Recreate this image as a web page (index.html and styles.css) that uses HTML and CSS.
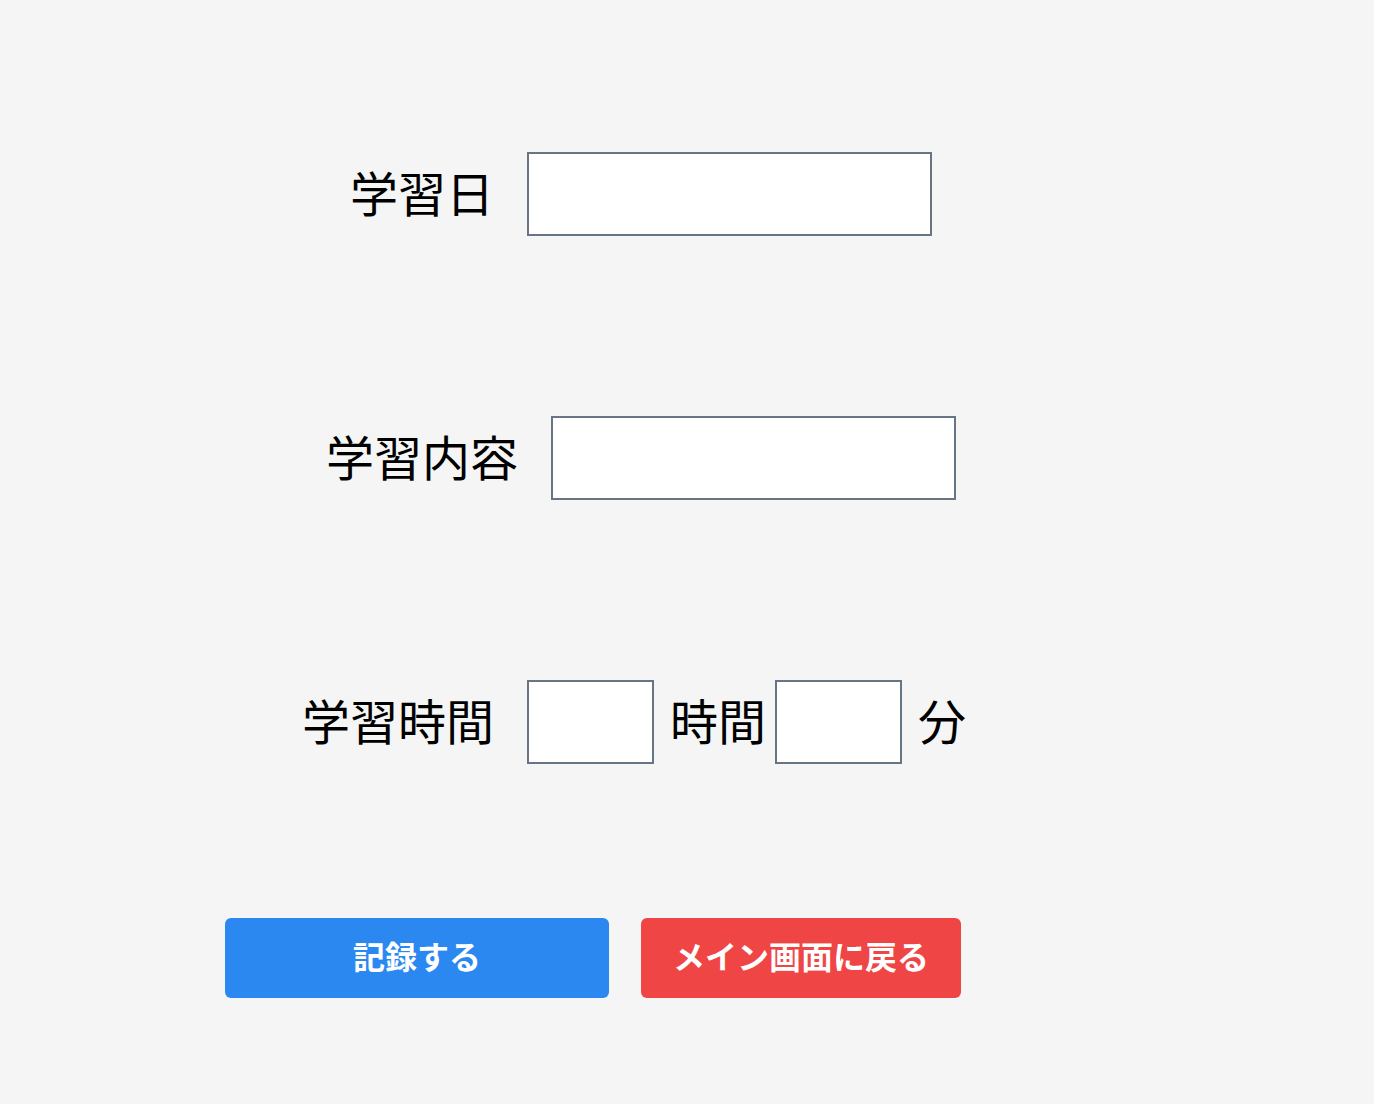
FILE: index.html
```html
<!DOCTYPE html>
<html lang="ja">
<head>
<meta charset="utf-8">
<title>学習記録</title>
<link rel="stylesheet" href="styles.css">
</head>
<body>
<main class="page">
  <form class="form">
    <div class="row">
      <label class="label" for="date">学習日</label>
      <input class="field field-wide" id="date" type="text">
    </div>
    <div class="row">
      <label class="label" for="content">学習内容</label>
      <input class="field field-wide" id="content" type="text">
    </div>
    <div class="row">
      <label class="label" for="hours">学習時間</label>
      <input class="field field-small" id="hours" type="text">
      <span class="unit">時間</span>
      <input class="field field-small" id="minutes" type="text">
      <span class="unit">分</span>
    </div>
    <div class="actions">
      <button class="btn btn-primary" type="button">記録する</button>
      <button class="btn btn-danger" type="button">メイン画面に戻る</button>
    </div>
  </form>
</main>
</body>
</html>
```

FILE: styles.css
```css
html, body {
  margin: 0;
  padding: 0;
  background: #f5f5f5;
}
body {
  font-family: "Noto Sans CJK JP", "Noto Sans", sans-serif;
  color: #000;
}
.page {
  width: 832px;
  margin-left: 225px;
  padding-top: 152px;
}
.form {
  display: flex;
  flex-direction: column;
}
.row {
  display: flex;
  align-items: center;
  justify-content: center;
  height: 84px;
  margin-bottom: 180px;
}
.row:nth-child(3) {
  margin-bottom: 154px;
}
.label {
  font-size: 48px;
  line-height: 1;
  padding-bottom: 6px;
  margin-right: 33px;
}
.field {
  box-sizing: border-box;
  height: 84px;
  border: 2px solid #687585;
  background: #fff;
  margin: 0;
  padding: 0 10px;
  font-size: 24px;
  font-family: inherit;
  border-radius: 0;
  outline: none;
}
.field-wide {
  width: 405px;
}
.field-small {
  width: 127px;
}
.unit {
  font-size: 48px;
  line-height: 1;
  padding-bottom: 6px;
  margin: 0 9px 0 16px;
}
.unit:last-child {
  margin-right: 14px;
}
.actions {
  display: flex;
  gap: 32px;
}
.btn {
  box-sizing: border-box;
  height: 80px;
  border: none;
  border-radius: 6px;
  color: #fff;
  font-family: "Noto Sans CJK JP", sans-serif;
  font-weight: 700;
  font-size: 32px;
  line-height: 1;
  padding: 0 0 6px;
  cursor: pointer;
}
.btn-primary {
  width: 384px;
  background: #2b88f0;
}
.btn-danger {
  width: 320px;
  background: #f04545;
}
```
